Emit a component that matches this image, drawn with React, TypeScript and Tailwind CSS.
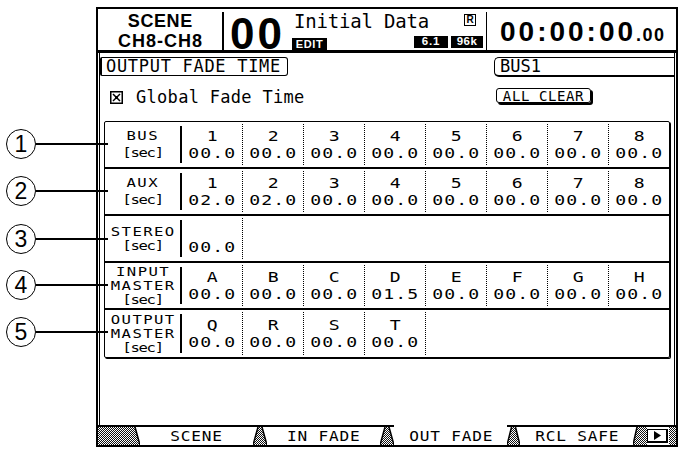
import React from "react";

type Row = {
  label: string[];
  heads: string[];
  values: string[];
};

const EIGHT = ["1", "2", "3", "4", "5", "6", "7", "8"];

const ROWS: Row[] = [
  {
    label: ["BUS", "[sec]"],
    heads: EIGHT,
    values: ["00.0", "00.0", "00.0", "00.0", "00.0", "00.0", "00.0", "00.0"],
  },
  {
    label: ["AUX", "[sec]"],
    heads: EIGHT,
    values: ["02.0", "02.0", "00.0", "00.0", "00.0", "00.0", "00.0", "00.0"],
  },
  {
    label: ["STEREO", "[sec]"],
    heads: [""],
    values: ["00.0"],
  },
  {
    label: ["INPUT", "MASTER", "[sec]"],
    heads: ["A", "B", "C", "D", "E", "F", "G", "H"],
    values: ["00.0", "00.0", "00.0", "01.5", "00.0", "00.0", "00.0", "00.0"],
  },
  {
    label: ["OUTPUT", "MASTER", "[sec]"],
    heads: ["Q", "R", "S", "T"],
    values: ["00.0", "00.0", "00.0", "00.0"],
  },
];

function TableRow({ row, last }: { row: Row; last: boolean }) {
  const twoLine = row.label.length === 2 && row.heads.length > 1;
  return (
    <div className={last ? "flex h-[47px]" : "flex h-[47px] border-b-2 border-black"}>
      <div
        className={
          twoLine
            ? "w-[75px] flex flex-col items-center justify-center text-[12px] leading-[17px]"
            : "w-[75px] flex flex-col items-center justify-center text-[12px] leading-[14px]"
        }
      >
        {row.label.map((l) => (
          <span
            key={l}
            className={l === "[sec]" ? "scale-x-[1.3] tracking-[-1px]" : "scale-x-[1.3] tracking-[1.1px] pl-[1.1px]"}
          >
            {l}
          </span>
        ))}
      </div>
      <div className="my-[4px] border-l-2 border-black" />
      {row.values.map((v, i) => (
        <React.Fragment key={i}>
          {i > 0 && <div className="my-[2px] border-l border-dotted border-black" />}
          <div className="w-[60px] flex flex-col items-center justify-center text-[14.5px] leading-[17px]">
            <span className="scale-x-[1.25] tracking-[0.9px] pl-[0.9px]">{row.heads[i] || "\u00a0"}</span>
            <span className="scale-x-[1.25] tracking-[0.9px] pl-[0.9px]">{v}</span>
          </div>
        </React.Fragment>
      ))}
      {row.values.length < 8 && <div className="my-[2px] border-l border-dotted border-black" />}
    </div>
  );
}

function Dither({ id }: { id: string }) {
  return (
    <defs>
      <pattern id={id} width="2" height="2" patternUnits="userSpaceOnUse">
        <rect width="2" height="2" fill="#fff" />
        <rect x="0" y="0" width="1" height="1" fill="#111" />
        <rect x="1" y="1" width="1" height="1" fill="#111" />
      </pattern>
    </defs>
  );
}

// Dithered separator between the page tabs; the slanted sides are the tab edges.
function Hatch({ w, kind, id }: { w: number; kind: "left" | "mid" | "preBtn" | "end"; id: string }) {
  const h = 18;
  let pts = "";
  let edges: [number, number, number, number][] = [];
  if (kind === "left") {
    pts = `0,0 ${w - 5},0 ${w},${h} 0,${h}`;
    edges = [[w - 5, 0, w, h]];
  } else if (kind === "mid") {
    pts = `${w / 2 - 2},0 ${w / 2 + 2},0 ${w},${h} 0,${h}`;
    edges = [
      [w / 2 - 2, 0, 0, h],
      [w / 2 + 2, 0, w, h],
    ];
  } else if (kind === "preBtn") {
    pts = `4,0 ${w},0 ${w},${h} 0,${h}`;
    edges = [[4, 0, 0, h]];
  } else {
    pts = `0,0 ${w},0 ${w},${h} 0,${h}`;
  }
  return (
    <svg width={w} height={h} className="block shrink-0">
      <Dither id={id} />
      <polygon points={pts} fill={`url(#${id})`} />
      {edges.map((e, i) => (
        <line key={i} x1={e[0]} y1={e[1]} x2={e[2]} y2={e[3]} stroke="#000" strokeWidth="1.5" />
      ))}
    </svg>
  );
}

function Tab({ label, active }: { label: string; active?: boolean }) {
  return (
    <div
      className={
        active
          ? "w-[113px] h-[20px] shrink-0 flex items-center justify-center pt-[2px]"
          : "w-[113px] h-[20px] shrink-0 flex items-center justify-center border-t-2 border-black"
      }
    >
      <span className="scale-x-[1.15] tracking-[0.7px] pl-[0.7px]">{label}</span>
    </div>
  );
}

function HatchCell({ w, kind, id }: { w: number; kind: "left" | "mid" | "preBtn" | "end"; id: string }) {
  return (
    <div className="h-[20px] shrink-0 border-t-2 border-black" style={{ width: w }}>
      <Hatch w={w} kind={kind} id={id} />
    </div>
  );
}

function TabBar() {
  return (
    <div className="h-[20px] flex text-[14px] leading-[18px]">
      <HatchCell w={42} kind="left" id="d0" />
      <Tab label="SCENE" />
      <HatchCell w={14} kind="mid" id="d1" />
      <Tab label="IN FADE" />
      <HatchCell w={14} kind="mid" id="d2" />
      <Tab label="OUT FADE" active />
      <HatchCell w={13} kind="mid" id="d3" />
      <Tab label="RCL SAFE" />
      <HatchCell w={14} kind="preBtn" id="d4" />
      <div className="w-[22px] h-[20px] shrink-0 border-t-2 border-black flex items-center">
        <div className="w-[21px] h-[14px] border border-black border-r-2 border-b-2 flex items-center justify-center">
          <svg width="9" height="9" viewBox="0 0 9 9">
            <polygon points="1,0 8,4.5 1,9" fill="#000" />
          </svg>
        </div>
      </div>
      <div className="flex-1 h-[20px] border-t-2 border-black">
        <Hatch w={7} kind="end" id="d5" />
      </div>
    </div>
  );
}

function Header() {
  return (
    <div className="h-[44px] shrink-0 flex border-b-[3px] border-black">
      {/* scene / channel block */}
      <div className="w-[124px] shrink-0 flex flex-col items-center font-['Liberation_Sans',Arial,sans-serif] font-bold text-[18px]">
        <div className="mt-[4px] leading-[17px] tracking-[0.6px] pl-[0.6px]">SCENE</div>
        <div className="self-stretch ml-[4px] mr-0 mt-[1px] h-[2px] bg-black" />
        <div className="mt-[2px] leading-[17px] tracking-[1px] pl-[1px]">CH8-CH8</div>
      </div>
      <div className="w-[2px] h-[38px] self-end bg-black" />
      {/* scene number and title */}
      <div className="w-[262px] shrink-0 flex">
        <div className="w-[66px] shrink-0 self-end pl-[6px] font-['Liberation_Sans',Arial,sans-serif] font-bold text-[44px] leading-[32px] tracking-[3px]">
          00
        </div>
        <div className="flex-1 flex flex-col">
          <div className="flex items-start">
            <span className="ml-[4px] mt-[3px] text-[19px] leading-[19px] tracking-[-0.2px]">Initial Data</span>
            <span className="ml-auto mr-[10px] mt-[5px] w-[12px] h-[12px] border border-black flex items-center justify-center font-['Liberation_Sans',Arial,sans-serif] font-bold text-[10px] leading-none">
              R
            </span>
          </div>
          <div className="mt-auto flex items-end">
            <span className="ml-[2px] w-[35px] h-[12px] bg-black text-white flex items-center justify-center font-['Liberation_Sans',Arial,sans-serif] font-bold text-[11px] leading-none tracking-[0.6px]">
              EDIT
            </span>
            <span className="ml-auto mb-[2px] w-[34px] h-[12px] bg-black text-white flex items-center justify-center font-['Liberation_Sans',Arial,sans-serif] font-bold text-[11.5px] leading-none tracking-[0.8px]">
              6.1
            </span>
            <span className="ml-[3px] mr-[3px] mb-[2px] w-[32px] h-[12px] bg-black text-white flex items-center justify-center font-['Liberation_Sans',Arial,sans-serif] font-bold text-[11.5px] leading-none tracking-[0.4px]">
              96k
            </span>
          </div>
        </div>
      </div>
      <div className="w-px h-[38px] self-end bg-black" />
      {/* time code */}
      <div className="flex-1 flex items-baseline pl-[13px] pt-[9px] font-['Liberation_Sans',Arial,sans-serif] font-bold">
        <span className="text-[28px] leading-[28px] tracking-[3px]">00:00:00</span>
        <span className="text-[18px] leading-[18px] tracking-[1.5px]">.00</span>
      </div>
    </div>
  );
}

function Body() {
  return (
    <div className="flex-1 flex flex-col ml-px mr-px border-x border-black">
      <div className="mt-[4px] h-[19px] flex">
        <div className="w-[188px] h-[19px] border border-black border-l-2 rounded-r-[3px] rounded-l-[2px] pl-[4px] text-[17px] leading-[17px] tracking-[0.7px]">
          OUTPUT FADE TIME
        </div>
        <div className="ml-auto w-[180px] h-[20px] border border-r-0 border-b-2 border-black rounded-l-[5px] pl-[5px] text-[17px] leading-[17px]">
          BUS1
        </div>
      </div>
      <div className="mt-[13px] h-[17px] flex items-center">
        <svg width="13" height="13" viewBox="0 0 13 13" className="ml-[10px] shrink-0">
          <rect x="0.75" y="0.75" width="11.5" height="11.5" fill="none" stroke="#000" strokeWidth="1.5" />
          <line x1="3" y1="3" x2="10" y2="10" stroke="#000" strokeWidth="1.5" />
          <line x1="10" y1="3" x2="3" y2="10" stroke="#000" strokeWidth="1.5" />
          <rect x="5" y="5" width="3" height="3" fill="#000" />
        </svg>
        <span className="ml-[13px] text-[17px] leading-[17px] tracking-[0.3px]">Global Fade Time</span>
        <div className="ml-auto mr-[83px] self-start -mt-[1px] w-[95px] h-[15px] border border-black rounded-[3px] shadow-[2px_2px_0_#000] flex items-center justify-center text-[14px] leading-[14px] tracking-[0.6px]">
          ALL CLEAR
        </div>
      </div>
      <div className="mt-[15px] ml-[4px] w-[566px] border border-black rounded-[2px] shadow-[1px_1px_0_#000]">
        {ROWS.map((r, i) => (
          <TableRow key={i} row={r} last={i === ROWS.length - 1} />
        ))}
      </div>
    </div>
  );
}

function Callout({ n, top }: { n: number; top: number }) {
  return (
    <div className="absolute left-[6px] flex items-center" style={{ top }}>
      <div className="w-[30px] h-[30px] rounded-full border border-black flex items-center justify-center font-['Liberation_Sans',Arial,sans-serif] text-[23px] leading-none">
        {n}
      </div>
      <div className="w-[72px] h-[2px] bg-black" />
    </div>
  );
}

export default function App() {
  const centers = [144, 191, 239, 285, 332];
  return (
    <div className="relative w-[679px] h-[451px] bg-white text-black overflow-hidden font-['DejaVu_Sans_Mono',monospace]">
      <div className="ml-[96px] mt-[7px] w-[582px] h-[440px] border-2 border-black flex flex-col">
        <Header />
        <Body />
        <TabBar />
      </div>
      {centers.map((c, i) => (
        <Callout key={i} n={i + 1} top={c - 15} />
      ))}
    </div>
  );
}
